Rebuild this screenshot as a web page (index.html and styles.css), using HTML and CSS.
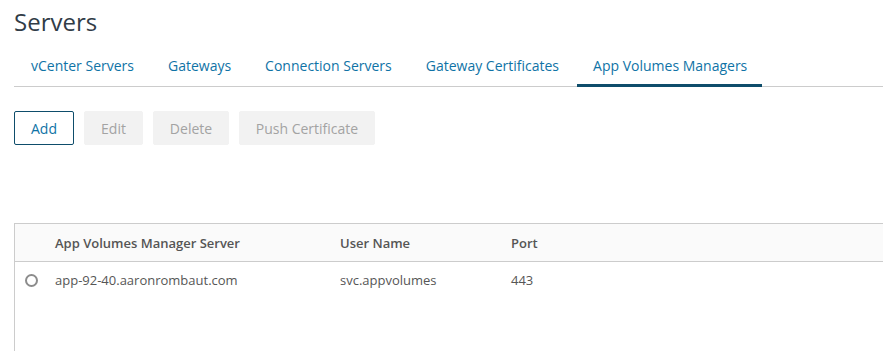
FILE: index.html
```html
<!doctype html>
<html>
<head lang="en">
	<meta charset="UTF-8">
	<meta name="viewport" content="width=device-width, initial-scale=1">
	<title>Servers</title>
	<link rel="stylesheet" href="styles.css">
</head>
<body>

<div class="page">
	<h1 class="page__title">Servers</h1>

	<nav class="tabs">
		<a class="tabs__item" href="#">vCenter Servers</a>
		<a class="tabs__item" href="#">Gateways</a>
		<a class="tabs__item" href="#">Connection Servers</a>
		<a class="tabs__item" href="#">Gateway Certificates</a>
		<a class="tabs__item is-active" href="#">App Volumes Managers</a>
	</nav>

	<div class="toolbar">
		<button class="btn">Add</button>
		<button class="btn" disabled>Edit</button>
		<button class="btn" disabled>Delete</button>
		<button class="btn" disabled>Push Certificate</button>
	</div>

	<div class="grid">
		<div class="grid__row grid__row--head">
			<div class="grid__select"></div>
			<div class="grid__cell grid__cell--server">App Volumes Manager Server</div>
			<div class="grid__cell grid__cell--user">User Name</div>
			<div class="grid__cell grid__cell--port">Port</div>
		</div>
		<div class="grid__row">
			<div class="grid__select"><span class="radio"></span></div>
			<div class="grid__cell grid__cell--server">app-92-40.aaronrombaut.com</div>
			<div class="grid__cell grid__cell--user">svc.appvolumes</div>
			<div class="grid__cell grid__cell--port">443</div>
		</div>
	</div>
</div>

</body>
</html>
```

FILE: styles.css
```css
* {
	margin: 0;
	padding: 0;
	box-sizing: border-box;
}
body {
	color: #565656;
	font-family: 'Open Sans', sans-serif;
	font-size: 13px;
	background: #fff;
	overflow: hidden;
}
.page {
	padding: 4px 0 0 14px;
}
.page__title {
	font-size: 24px;
	font-weight: normal;
	color: #313c47;
	line-height: 36px;
}
.tabs {
	display: flex;
	margin-top: 11px;
	border-bottom: 1px solid #cccccc;
	font-size: 14px;
}
.tabs__item {
	display: block;
	padding: 0 17px;
	height: 36px;
	line-height: 30px;
	color: #0f73a6;
	text-decoration: none;
	border-bottom: 3px solid transparent;
	margin-bottom: -1px;
	white-space: nowrap;
}
.tabs__item.is-active {
	border-bottom-color: #0e4d6b;
	padding: 0 15px 0 16px;
	margin-left: 1px;
}
.toolbar {
	display: flex;
	gap: 10px;
	margin-top: 24px;
}
.btn {
	height: 34px;
	padding: 0;
	font-family: inherit;
	font-size: 14px;
	white-space: nowrap;
	color: #0f73a6;
	background: #fff;
	border: 1px solid #0e4d6b;
	border-radius: 2px;
}
.btn:first-child {
	width: 60px;
}
.btn:nth-child(2) {
	width: 59px;
}
.btn:nth-child(3) {
	width: 76px;
}
.btn:nth-child(4) {
	width: 136px;
}
.btn:disabled {
	color: #a3a3a3;
	background: #f2f2f2;
	border-color: #f2f2f2;
}
.grid {
	margin-top: 78px;
	border: 1px solid #cccccc;
	border-right: none;
	border-bottom: none;
	height: 128px;
}
.grid__row {
	display: flex;
	align-items: center;
	height: 36px;
}
.grid__row--head {
	height: 38px;
	background: #fafafa;
	border-bottom: 1px solid #cccccc;
	color: #555;
	font-weight: 600;
}
.grid__select {
	width: 40px;
	display: flex;
	padding-left: 10px;
}
.grid__cell--server {
	width: 285px;
}
.grid__cell--user {
	width: 171px;
}
.radio {
	display: block;
	width: 13px;
	height: 13px;
	border: 2px solid #8c8c8c;
	border-radius: 50%;
}
```
